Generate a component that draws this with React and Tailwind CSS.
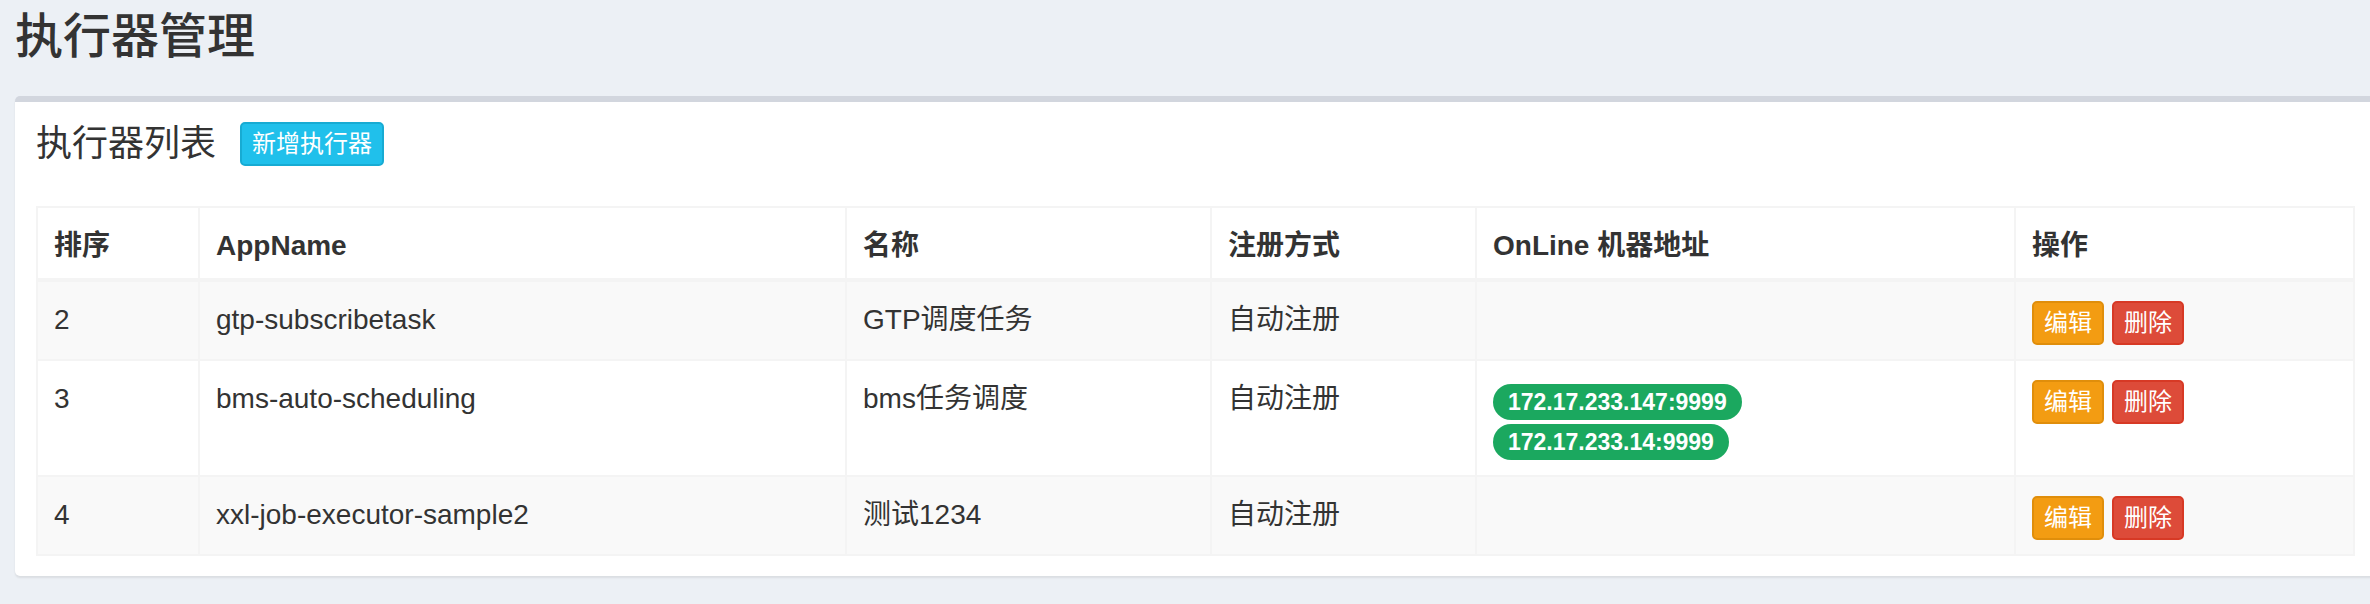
import React from 'react';

const font = { fontFamily: '"Liberation Sans", "Noto Sans CJK SC", sans-serif' };

const rows = [
  { order: '2', app: 'gtp-subscribetask', name: 'GTP调度任务', type: '自动注册', addrs: [], h: 'h-[79px] border-b-2', striped: true },
  { order: '3', app: 'bms-auto-scheduling', name: 'bms任务调度', type: '自动注册', addrs: ['172.17.233.147:9999', '172.17.233.14:9999'], h: 'h-[116px] border-b-2', striped: false },
  { order: '4', app: 'xxl-job-executor-sample2', name: '测试1234', type: '自动注册', addrs: [], h: 'h-[77px]', striped: true },
];

const cols = 'grid grid-cols-[162px_647px_365px_265px_539px_337px]';
const cell = 'border-r-2 border-[#f4f4f4] px-4 pt-[18px] leading-[40px]';

function Buttons() {
  return (
    <div className="flex gap-2 px-4 pt-[19px]">
      <button className="h-[44px] w-[72px] rounded-[5px] border-2 border-[#e08e0b] bg-[#f39c12] text-[24px] leading-none text-white">编辑</button>
      <button className="h-[44px] w-[72px] rounded-[5px] border-2 border-[#d73925] bg-[#dd4b39] text-[24px] leading-none text-white">删除</button>
    </div>
  );
}

export default function App() {
  return (
    <div className="min-h-screen w-full overflow-hidden bg-[#ecf0f5] text-[#333]" style={font}>
      <h1 className="pl-[15px] pt-[13px] text-[48px] leading-[48px] font-medium">执行器管理</h1>

      <div className="mt-[35px] ml-[15px] w-[2361px] rounded-[5px] border-t-[6px] border-[#d2d6de] bg-white px-[21px] pb-[20px] shadow-[0_2px_2px_rgba(0,0,0,0.08)]">
        <div className="flex h-[44px] items-center mt-[20px]">
          <h3 className="text-[36px] leading-[44px] font-normal">执行器列表</h3>
          <button className="ml-[24px] h-[44px] rounded-[5px] border-2 border-[#17abd3] bg-[#20c0eb] px-[10px] text-[24px] leading-none text-white">新增执行器</button>
        </div>

        <div className="mt-[40px] w-[2319px] border-2 border-[#f4f4f4] text-[28px]">
          <div className={`${cols} h-[74px] border-b-4 border-[#f4f4f4] font-bold`}>
            <div className={cell}>排序</div>
            <div className={cell}>AppName</div>
            <div className={cell}>名称</div>
            <div className={cell}>注册方式</div>
            <div className={cell}>OnLine 机器地址</div>
            <div className="px-4 pt-[18px] leading-[40px]">操作</div>
          </div>
          {rows.map((r) => (
            <div key={r.order} className={`${cols} ${r.h} border-[#f4f4f4] ${r.striped ? 'bg-[#f9f9f9]' : 'bg-white'}`}>
              <div className={cell}>{r.order}</div>
              <div className={cell}>{r.app}</div>
              <div className={cell}>{r.name}</div>
              <div className={cell}>{r.type}</div>
              <div className="flex flex-col items-start gap-[4px] border-r-2 border-[#f4f4f4] px-4 pt-[23px]">
                {r.addrs.map((a) => (
                  <span key={a} className="h-[36px] rounded-full bg-[#1ba85f] px-[15px] text-[23px] font-bold leading-[36px] text-white">{a}</span>
                ))}
              </div>
              <Buttons />
            </div>
          ))}
        </div>
      </div>
    </div>
  );
}
